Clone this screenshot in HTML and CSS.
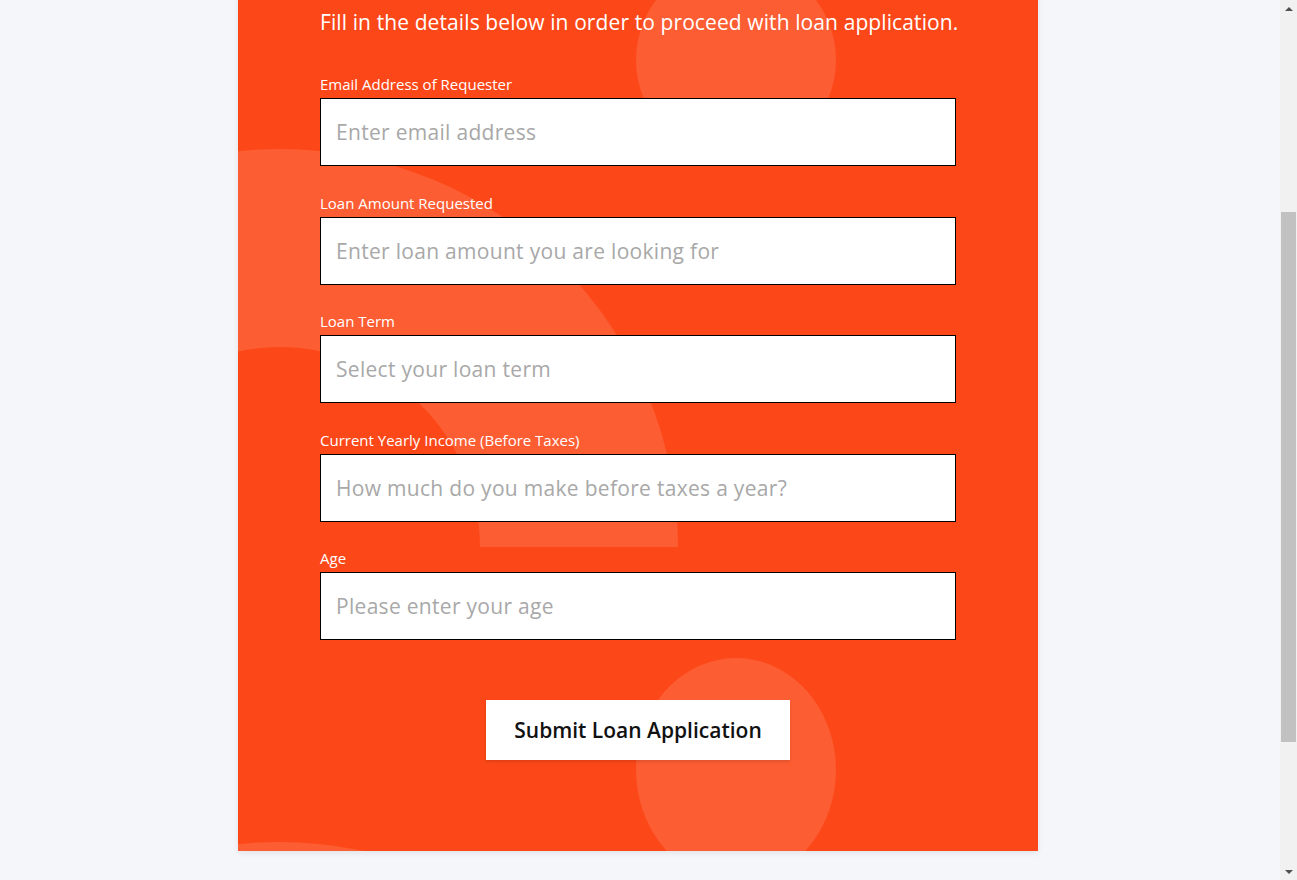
FILE: index.html
```html
<!DOCTYPE html>
<html lang="en">
<head>
<meta charset="utf-8">
<title>Loan Application</title>
<link rel="stylesheet" href="styles.css">
</head>
<body>
<main class="page">
  <section class="card">
    <svg class="card-bg" width="800" height="1135" viewBox="0 0 800 1135" aria-hidden="true">
      <ellipse cx="498" cy="344" rx="100" ry="100" class="shape"/>
      <ellipse cx="498" cy="1054" rx="100" ry="112" class="shape"/>
      <path class="shape" d="M -356 831 A 398 398 0 0 1 440 831 L 242 831 A 200 200 0 0 0 -158 831 Z"/>
      <path class="shape" d="M -356 1524 A 398 398 0 0 1 440 1524 L 242 1524 A 200 200 0 0 0 -158 1524 Z"/>
    </svg>
    <div class="card-content">
      <p class="subtitle">Fill in the details below in order to proceed with loan application.</p>
      <form class="form">
        <div class="field">
          <label class="label" for="email">Email Address of Requester</label>
          <input class="input" id="email" type="email" placeholder="Enter email address">
        </div>
        <div class="field">
          <label class="label" for="amount">Loan Amount Requested</label>
          <input class="input" id="amount" type="text" placeholder="Enter loan amount you are looking for">
        </div>
        <div class="field">
          <label class="label" for="term">Loan Term</label>
          <input class="input" id="term" type="text" placeholder="Select your loan term">
        </div>
        <div class="field">
          <label class="label" for="income">Current Yearly Income (Before Taxes)</label>
          <input class="input" id="income" type="text" placeholder="How much do you make before taxes a year?">
        </div>
        <div class="field field-last">
          <label class="label" for="age">Age</label>
          <input class="input" id="age" type="text" placeholder="Please enter your age">
        </div>
        <div class="actions">
          <button class="submit" type="button">Submit Loan Application</button>
        </div>
      </form>
    </div>
  </section>
</main>
<div class="scrollbar" aria-hidden="true">
  <div class="sb-btn"><span class="sb-up"></span></div>
  <div class="sb-track"><div class="sb-thumb"></div></div>
  <div class="sb-btn"><span class="sb-down"></span></div>
</div>
<script src="script.js"></script>
</body>
</html>
```
FILE: styles.css
```css
html {
  scroll-behavior: auto;
}
body {
  margin: 0;
  background: #f5f6fa;
  font-family: "Open Sans", "Liberation Sans", sans-serif;
}
.page {
  padding: 40px 21px 235px 0;
}
.card {
  position: relative;
  width: 800px;
  margin: 0 auto;
  background: #fc4819;
  overflow: hidden;
  box-shadow: 0 2px 6px rgba(0, 0, 0, 0.08);
}
.card-bg {
  position: absolute;
  left: 0;
  top: 0;
}
.shape {
  fill: #fd5d33;
}
.card-content {
  position: relative;
  padding: 291px 82px 91px;
}
.subtitle {
  margin: 0 0 37px;
  font-size: 21px;
  line-height: 30px;
  font-weight: 500;
  letter-spacing: 0.1px;
  color: #fff;
  text-align: center;
  white-space: nowrap;
}
.form {
  display: flex;
  flex-direction: column;
}
.field {
  display: flex;
  flex-direction: column;
  margin-bottom: 26.5px;
}
.field-last {
  margin-bottom: 0;
}
.label {
  font-size: 15px;
  line-height: 20px;
  font-weight: 500;
  color: #fff;
  margin-bottom: 4px;
}
.input {
  box-sizing: border-box;
  height: 68px;
  width: 100%;
  margin: 0;
  border: 1px solid #000;
  border-radius: 0;
  background: #fff;
  padding: 0 15px;
  font-family: inherit;
  font-size: 21px;
  letter-spacing: 0.3px;
  color: #222;
  outline: none;
}
.input::placeholder {
  color: #a8a8a8;
}
.actions {
  display: flex;
  justify-content: center;
  margin-top: 60px;
}
.submit {
  height: 60px;
  padding: 0 28px;
  border: none;
  background: #fff;
  color: #111;
  font-family: inherit;
  font-size: 21px;
  font-weight: 600;
  box-shadow: 0 2px 3px rgba(0, 0, 0, 0.12);
  cursor: pointer;
}

/* static scrollbar chrome */
.scrollbar {
  position: fixed;
  top: 0;
  right: 0;
  width: 17px;
  height: 100vh;
  background: #f1f1f1;
  display: flex;
  flex-direction: column;
}
.sb-btn {
  height: 17px;
  display: flex;
  align-items: center;
  justify-content: center;
}
.sb-up {
  width: 0;
  height: 0;
  border-left: 4px solid transparent;
  border-right: 4px solid transparent;
  border-bottom: 4px solid #505050;
}
.sb-down {
  width: 0;
  height: 0;
  border-left: 4px solid transparent;
  border-right: 4px solid transparent;
  border-top: 4px solid #505050;
}
.sb-track {
  flex: 1;
  padding-top: 195px;
}
.sb-thumb {
  width: 15px;
  height: 530px;
  margin-left: 1px;
  background: #c1c1c1;
}
```
FILE: script.js
```js
window.scrollTo(0, 324);
window.addEventListener('load', function () {
  window.scrollTo(0, 324);
});
```
